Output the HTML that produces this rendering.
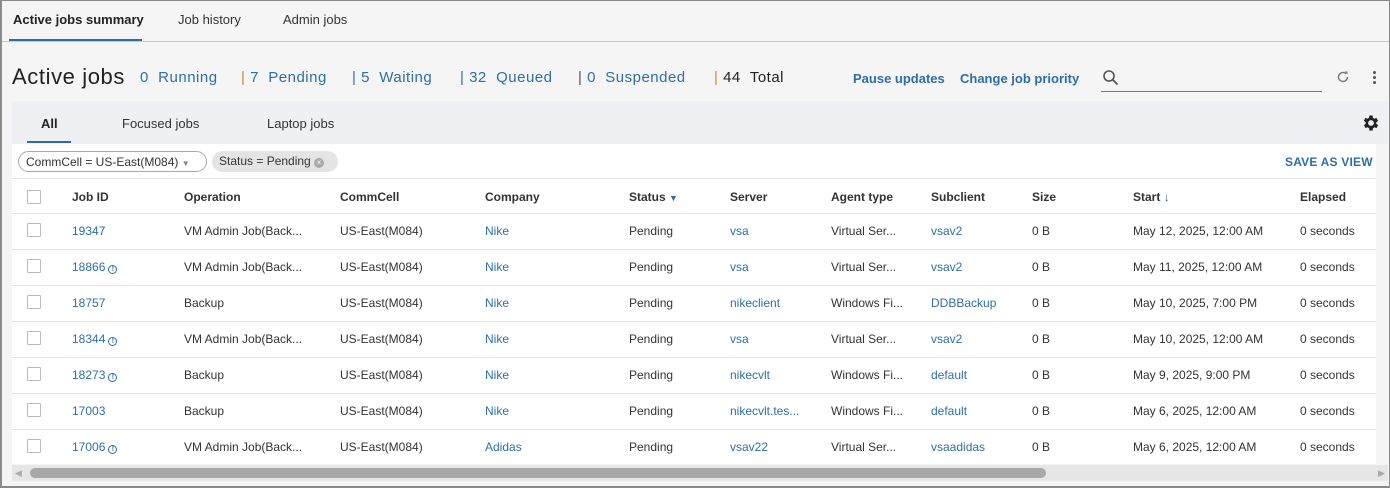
<!DOCTYPE html>
<html><head><meta charset="utf-8"><style>
*{box-sizing:border-box;margin:0;padding:0}
body{width:1390px;height:488px;overflow:hidden;background:#f5f5f5;font-family:"Liberation Sans",sans-serif;color:#333;position:relative}
.frame{position:absolute;left:0;top:0;width:1390px;height:488px;border:1px solid #8a8a8a;border-left:2px solid #8a8a8a;border-bottom:2px solid #8a8a8a;pointer-events:none;z-index:5}
.a{position:absolute;white-space:nowrap}
.tab{font-size:13px;top:12px;color:#333}
.blue{color:#2f6ea5}
.hdr{font-size:12px;font-weight:bold;color:#333;top:190px}
.cell{font-size:12px}
.st{font-size:15px;top:69px;letter-spacing:0.5px}
.row{position:absolute;left:12px;width:1364px;height:1px;background:#e6e6e6}
.cb{position:absolute;left:27px;width:14px;height:14px;border:1px solid #bbb;background:#fff;border-radius:1px}
.info{display:inline-block;width:9px;height:9px;border:1px solid #2f6ea5;border-radius:50%;font-size:7px;line-height:7px;text-align:center;margin-left:3px;vertical-align:0px;font-weight:bold}
</style></head><body>
<div class="frame"></div>
<div class="a tab" style="left:13px;font-weight:bold;color:#222">Active jobs summary</div>
<div class="a tab" style="left:178px">Job history</div>
<div class="a tab" style="left:283px">Admin jobs</div>
<div class="a" style="left:9px;top:39px;width:133px;height:2px;background:#2f6ea5"></div>
<div class="a" style="left:0;top:41px;width:1390px;height:1px;background:#c8c8c8"></div>

<div class="a" style="left:12px;top:64px;font-size:22px;color:#222;letter-spacing:0.6px">Active jobs</div>
<div class="a st" style="left:140px;color:#2f6ea5">0&nbsp; Running</div>
<div class="a st" style="left:241px;color:#2f6ea5"><span style="color:#c58a3a">|</span> 7&nbsp; Pending</div>
<div class="a st" style="left:352px;color:#2f6ea5"><span>|</span> 5&nbsp; Waiting</div>
<div class="a st" style="left:460px;color:#2f6ea5"><span>|</span> 32&nbsp; Queued</div>
<div class="a st" style="left:578px;color:#2f6ea5"><span style="color:#555">|</span> 0&nbsp; Suspended</div>
<div class="a st" style="left:714px;color:#222"><span style="color:#c58a3a">|</span> 44&nbsp; Total</div>

<div class="a blue" style="left:853px;top:71px;font-size:13px;font-weight:bold">Pause updates</div>
<div class="a blue" style="left:960px;top:71px;font-size:13px;font-weight:bold">Change job priority</div>
<svg class="a" style="left:1102px;top:69px" width="18" height="18" viewBox="0 0 18 18"><circle cx="7" cy="7" r="5" fill="none" stroke="#555" stroke-width="1.6"/><path d="M10.5 10.5L15.5 15.5" stroke="#555" stroke-width="1.8"/></svg>
<div class="a" style="left:1101px;top:91px;width:221px;height:1px;background:#777"></div>
<svg class="a" style="left:1335px;top:69px" width="16" height="16" viewBox="0 0 16 16"><path d="M12.5 8A4.5 4.5 0 1 1 11 4.6" fill="none" stroke="#777" stroke-width="1.4"/><path d="M9.5 2.5L12.5 2.5L12.5 5.5Z" fill="#777"/></svg>
<div class="a" style="left:1373px;top:71px;width:3px;height:3px;background:#555;border-radius:50%;box-shadow:0 5px 0 #555,0 10px 0 #555"></div>

<div class="a" style="left:12px;top:101px;width:1376px;height:43px;background:#eef0f4"></div>
<div class="a" style="left:41px;top:116px;font-size:13px;font-weight:bold;color:#222">All</div>
<div class="a" style="left:27px;top:141px;width:44px;height:2px;background:#2f6ea5"></div>
<div class="a" style="left:122px;top:116px;font-size:13px">Focused jobs</div>
<div class="a" style="left:267px;top:116px;font-size:13px">Laptop jobs</div>
<svg class="a" style="left:1361px;top:113px" width="20" height="20" viewBox="0 0 24 24"><path fill="#222" d="M19.4 13a7.5 7.5 0 0 0 0-2l2.1-1.6-2-3.5-2.5 1a7 7 0 0 0-1.7-1L15 3h-4l-.4 2.9a7 7 0 0 0-1.7 1l-2.5-1-2 3.5L6.6 11a7.5 7.5 0 0 0 0 2l-2.1 1.6 2 3.5 2.5-1a7 7 0 0 0 1.7 1L11 21h4l.4-2.9a7 7 0 0 0 1.7-1l2.5 1 2-3.5zM13 15.5a3.5 3.5 0 1 1 0-7 3.5 3.5 0 0 1 0 7z" transform="translate(-1 0)"/></svg>

<div class="a" style="left:12px;top:144px;width:1364px;height:320px;background:#fff"></div>
<div class="a" style="left:18px;top:151px;width:189px;height:21px;border:1px solid #aaa;border-radius:11px;background:#fff;font-size:12px;padding:3px 0 0 7px">CommCell = US-East(M084) <span style="font-size:8px;color:#888">▼</span></div>
<div class="a" style="left:212px;top:151px;width:126px;height:21px;border-radius:11px;background:#e4e4e4;font-size:12px;padding:3px 0 0 7px">Status = Pending <span style="display:inline-block;width:10px;height:10px;border-radius:50%;background:#aaa;color:#fff;font-size:8px;line-height:10px;text-align:center;vertical-align:0">×</span></div>
<div class="a blue" style="left:1285px;top:155px;font-size:12px;font-weight:bold;letter-spacing:0.2px">SAVE AS VIEW</div>
<div class="row" style="top:178px"></div>

<div class="cb" style="top:190px"></div>
<div class="a hdr" style="left:72px">Job ID</div>
<div class="a hdr" style="left:184px">Operation</div>
<div class="a hdr" style="left:340px">CommCell</div>
<div class="a hdr" style="left:485px">Company</div>
<div class="a hdr" style="left:629px">Status <span style="color:#2f6ea5;font-size:9px">▼</span></div>
<div class="a hdr" style="left:730px">Server</div>
<div class="a hdr" style="left:831px">Agent type</div>
<div class="a hdr" style="left:931px">Subclient</div>
<div class="a hdr" style="left:1032px">Size</div>
<div class="a hdr" style="left:1133px">Start <span style="color:#2f6ea5">↓</span></div>
<div class="a hdr" style="left:1300px">Elapsed</div>
<div class="row" style="top:213px"></div>

<div id="rows"></div>
<script>
var d=[["19347",0,"VM Admin Job(Back...","Nike","vsa","Virtual Ser...","vsav2","May 12, 2025, 12:00 AM"],
["18866",1,"VM Admin Job(Back...","Nike","vsa","Virtual Ser...","vsav2","May 11, 2025, 12:00 AM"],
["18757",0,"Backup","Nike","nikeclient","Windows Fi...","DDBBackup","May 10, 2025, 7:00 PM"],
["18344",1,"VM Admin Job(Back...","Nike","vsa","Virtual Ser...","vsav2","May 10, 2025, 12:00 AM"],
["18273",1,"Backup","Nike","nikecvlt","Windows Fi...","default","May 9, 2025, 9:00 PM"],
["17003",0,"Backup","Nike","nikecvlt.tes...","Windows Fi...","default","May 6, 2025, 12:00 AM"],
["17006",1,"VM Admin Job(Back...","Adidas","vsav22","Virtual Ser...","vsaadidas","May 6, 2025, 12:00 AM"]];
var h="";
d.forEach(function(r,i){var y=224+i*36;
h+='<div class="cb" style="top:'+(y-1)+'px"></div>';
function c(x,t,b){h+='<div class="a cell'+(b?' blue':'')+'" style="left:'+x+'px;top:'+y+'px">'+t+'</div>';}
c(72,r[0]+(r[1]?'<span class="info">!</span>':''),1);
c(184,r[2]);c(340,"US-East(M084)");c(485,r[3],1);c(629,"Pending");c(730,r[4],1);c(831,r[5]);c(931,r[6],1);c(1032,"0 B");c(1133,r[7]);c(1300,"0 seconds");
if(i<6)h+='<div class="row" style="top:'+(y+25)+'px"></div>';});
document.getElementById("rows").innerHTML=h;
</script>
<div class="a" style="left:12px;top:465px;width:1376px;height:16px;background:#e6e6e6"></div>
<div class="a" style="left:15px;top:468px;font-size:9px;color:#aaa">◀</div>
<div class="a" style="left:30px;top:468px;width:1016px;height:10px;background:#a8a8a8;border-radius:5px"></div>
<div class="a" style="left:1378px;top:468px;font-size:9px;color:#aaa">▶</div>
</body></html>
